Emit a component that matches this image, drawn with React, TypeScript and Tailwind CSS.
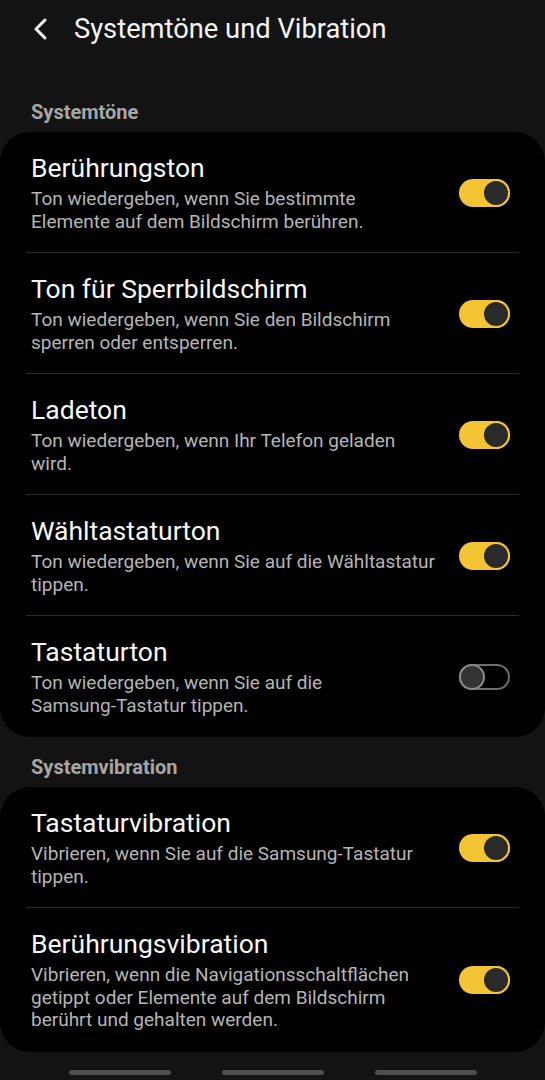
import React from "react";

type Item = { title: string; lines: string[]; on: boolean };

const systemTones: Item[] = [
  { title: "Berührungston", lines: ["Ton wiedergeben, wenn Sie bestimmte", "Elemente auf dem Bildschirm berühren."], on: true },
  { title: "Ton für Sperrbildschirm", lines: ["Ton wiedergeben, wenn Sie den Bildschirm", "sperren oder entsperren."], on: true },
  { title: "Ladeton", lines: ["Ton wiedergeben, wenn Ihr Telefon geladen", "wird."], on: true },
  { title: "Wähltastaturton", lines: ["Ton wiedergeben, wenn Sie auf die Wähltastatur", "tippen."], on: true },
  { title: "Tastaturton", lines: ["Ton wiedergeben, wenn Sie auf die", "Samsung-Tastatur tippen."], on: false },
];

const systemVibration: Item[] = [
  { title: "Tastaturvibration", lines: ["Vibrieren, wenn Sie auf die Samsung-Tastatur", "tippen."], on: true },
  {
    title: "Berührungsvibration",
    lines: ["Vibrieren, wenn die Navigationsschaltflächen", "getippt oder Elemente auf dem Bildschirm", "berührt und gehalten werden."],
    on: true,
  },
];

const Toggle = ({ on }: { on: boolean }) => {
  if (on) {
    return (
      <div className="relative w-[51px] h-[28px] rounded-full bg-[#f3c433] shrink-0">
        <div className="absolute right-0 top-0 w-[28px] h-[28px] rounded-full bg-[#2a2a2a] border-[2px] border-[#f3c433]" />
      </div>
    );
  }
  return (
    <div className="relative w-[51px] h-[26px] rounded-full border-[2px] border-[#6e6e6e] shrink-0">
      <div className="absolute left-[-2px] top-[-2px] w-[26px] h-[26px] rounded-full bg-[#333333] border-[2px] border-[#8a8a8a]" />
    </div>
  );
};

const Row = ({ item, last }: { item: Item; last: boolean }) => (
  <div className="px-[26px]">
    <div className={`flex items-center pl-[5px] pr-[9px] pt-[21px] ${last ? "pb-[20px]" : "pb-[19px] border-b border-[#2a2a2a]"}`}>
      <div className="flex-1">
        <div className="text-[26.5px] leading-[30px] text-[#f7f7f7]">{item.title}</div>
        <div className="mt-[5px] text-[19px] leading-[22.5px] text-[#b5b5b5] whitespace-nowrap">
          {item.lines.map((l, i) => (
            <div key={i}>{l}</div>
          ))}
        </div>
      </div>
      <Toggle on={item.on} />
    </div>
  </div>
);

const Section = ({ label, items }: { label: string; items: Item[] }) => (
  <div>
    <div className="px-[31px] pt-[19px] pb-[9px] text-[20px] leading-[22px] font-bold text-[#a6a6a6]">{label}</div>
    <div className="bg-black rounded-[30px]">
      {items.map((item, i) => (
        <Row key={item.title} item={item} last={i === items.length - 1} />
      ))}
    </div>
  </div>
);

export default function App() {
  return (
    <div className="w-[545px] h-[1080px] bg-[#131313] overflow-hidden" style={{ fontFamily: "Roboto, 'Noto Sans', sans-serif" }}>
      <div className="flex items-center h-[58px] pl-[32px]">
        <svg width="18" height="24" viewBox="0 0 18 24" fill="none">
          <path d="M13 3 L4 12 L13 21" stroke="#f5f5f5" strokeWidth="3" strokeLinecap="round" strokeLinejoin="round" />
        </svg>
        <div className="ml-[24px] text-[27.3px] text-[#f5f5f5]">Systemtöne und Vibration</div>
      </div>
      <div className="pt-[24px]">
        <Section label="Systemtöne" items={systemTones} />
      </div>
      <Section label="Systemvibration" items={systemVibration} />
      <div className="flex justify-center gap-[51px] mt-[18px]">
        <div className="w-[102px] h-[5px] rounded-full bg-[#4f4f4f]" />
        <div className="w-[102px] h-[5px] rounded-full bg-[#4f4f4f]" />
        <div className="w-[102px] h-[5px] rounded-full bg-[#4f4f4f]" />
      </div>
    </div>
  );
}
